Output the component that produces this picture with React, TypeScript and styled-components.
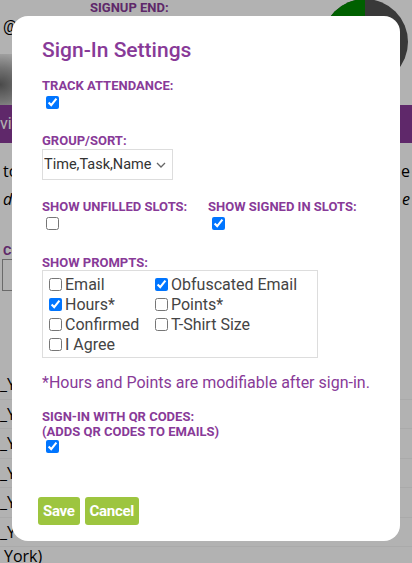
import styled, { createGlobalStyle } from "styled-components";

const GlobalStyle = createGlobalStyle`
  html, body {
    margin: 0;
    padding: 0;
    background: #ffffff;
    font-family: Roboto, "Liberation Sans", Arial, sans-serif;
    overflow: hidden;
  }
`;

const PURPLE = "#883a98";

const Page = styled.div`
  position: relative;
  width: 412px;
  height: 563px;
  overflow: hidden;
  color: #000;
  font-size: 16px;
`;

const Header = styled.div`
  display: flex;
  justify-content: space-between;
  height: 105px;
`;

const HeaderLeft = styled.div`
  display: flex;
  flex-direction: column;
  flex: 1;
`;

const SignupEnd = styled.div`
  padding-left: 90px;
  font-size: 13px;
  font-weight: bold;
  color: ${PURPLE};
  line-height: 16px;
`;

const AtLine = styled.div`
  padding: 2px 0 0 3px;
  font-size: 16px;
  line-height: 18px;
`;

const Shade = styled.div`
  margin-top: 18px;
  width: 40px;
  height: 56px;
  background: radial-gradient(ellipse at 0% 60%, #6a6a6a 0%, #a8a8a8 40%, #fff 85%);
`;

const Pie = styled.svg`
  margin: -1px 4px 0 0;
  flex-shrink: 0;
`;

const NavBar = styled.div`
  height: 38px;
  background: ${PURPLE};
  color: #fff;
  font-size: 16px;
  line-height: 38px;
  white-space: nowrap;
  overflow: hidden;
`;

const TextRow = styled.div<{ $italic?: boolean }>`
  display: flex;
  justify-content: space-between;
  padding: 0 2px 0 3px;
  height: 28px;
  line-height: 28px;
  font-style: ${(p) => (p.$italic ? "italic" : "normal")};
  font-family: "Open Sans", Roboto, sans-serif;
`;

const FirstRow = styled(TextRow)`
  margin-top: 14px;
`;

const ColLabel = styled.div`
  margin: 30px 0 0 3px;
  font-weight: bold;
  font-size: 13px;
  color: ${PURPLE};
`;

const InputBox = styled.div`
  margin: 1px 0 0 2px;
  width: 80px;
  height: 30px;
  border: 1px solid #999;
  background: #fff;
`;

const List = styled.div`
  margin-top: 79px;
  display: flex;
  flex-direction: column;
`;

const ListItem = styled.div`
  height: 28.5px;
  line-height: 28.5px;
  font-family: "Open Sans", Roboto, sans-serif;
  border-bottom: 1px solid #f4f4f4;
`;

const LastItem = styled.div`
  height: 18px;
  line-height: 18px;
  padding-left: 4px;
  font-family: "Open Sans", Roboto, sans-serif;
`;

const Overlay = styled.div`
  position: absolute;
  inset: 0;
  background: rgba(0, 0, 0, 0.3);
`;

const Modal = styled.div`
  position: absolute;
  left: 12px;
  top: 16px;
  width: 388px;
  height: 525px;
  box-sizing: border-box;
  background: #fff;
  border-radius: 16px;
  padding: 20px 30px 16px 30px;
  display: flex;
  flex-direction: column;
`;

const Title = styled.h2`
  margin: 0;
  font-size: 21px;
  font-weight: 500;
  line-height: 28px;
  color: ${PURPLE};
`;

const Section = styled.div<{ $gap: number }>`
  margin-top: ${(p) => p.$gap}px;
`;

const Label = styled.div`
  font-size: 13px;
  font-weight: bold;
  line-height: 15px;
  color: ${PURPLE};
  text-transform: uppercase;
`;

const Check = styled.input.attrs({ type: "checkbox" })<{ $top?: number }>`
  display: block;
  width: 13px;
  height: 13px;
  margin: ${(p) => p.$top ?? 3}px 0 0 4px;
`;

const Pair = styled.div`
  display: grid;
  grid-template-columns: 166px auto;
`;

const SelectWrap = styled.div`
  position: relative;
  margin-top: 1px;
  width: 131px;
  height: 31px;
`;

const Select = styled.select`
  appearance: none;
  width: 131px;
  height: 31px;
  box-sizing: border-box;
  border: 1px solid #dddddd;
  border-radius: 0;
  background: #fff;
  padding: 0 0 0 1px;
  font-family: Roboto, "Liberation Sans", sans-serif;
  font-size: 14.5px;
  color: #333;
  outline: none;
`;

const Chevron = styled.svg`
  position: absolute;
  right: 7px;
  top: 13px;
  pointer-events: none;
`;

const PromptBox = styled.div`
  margin-top: 0;
  width: 276px;
  box-sizing: border-box;
  border: 1px solid #dddddd;
  padding: 3px 2px 3px 2px;
  display: grid;
  grid-template-columns: 106px auto;
`;

const Option = styled.label`
  display: flex;
  align-items: center;
  height: 20px;
  font-size: 16px;
  color: #444;
  white-space: nowrap;

  input {
    margin: 0 3px 0 4px;
    width: 13px;
    height: 13px;
  }
`;

const Note = styled.div`
  margin-top: 15px;
  font-size: 16px;
  line-height: 20px;
  color: ${PURPLE};
`;

const Buttons = styled.div`
  margin-top: auto;
  margin-left: -4px;
  display: flex;
  gap: 5px;
`;

const Button = styled.button`
  height: 28px;
  padding: 0 5px;
  border: none;
  border-radius: 3px;
  background: #9dc53f;
  color: #fff;
  font-family: Roboto, "Liberation Sans", sans-serif;
  font-size: 15px;
  font-weight: bold;
  letter-spacing: -0.3px;
  cursor: pointer;
`;

const prompts = [
  { name: "Email", checked: false },
  { name: "Obfuscated Email", checked: true },
  { name: "Hours*", checked: true },
  { name: "Points*", checked: false },
  { name: "Confirmed", checked: false },
  { name: "T-Shirt Size", checked: false },
  { name: "I Agree", checked: false },
];

const listRows = ["_Y", "_Y", "_Y", "_Y", "_Y", "_Y"];

export default function App() {
  return (
    <>
      <GlobalStyle />
      <Page>
        <Header>
          <HeaderLeft>
            <SignupEnd>SIGNUP END:</SignupEnd>
            <AtLine>@</AtLine>
            <Shade />
          </HeaderLeft>
          <Pie width="86" height="86" viewBox="0 0 86 86">
            <circle cx="43" cy="43" r="43" fill="#525252" />
            <path d="M43 43 L43 0 A43 43 0 0 0 0 43 Z" fill="#008a00" />
          </Pie>
        </Header>
        <NavBar>vices</NavBar>
        <FirstRow>
          <span>to</span>
          <span>e</span>
        </FirstRow>
        <TextRow $italic>
          <span>d</span>
          <span>y e</span>
        </TextRow>
        <ColLabel>CO</ColLabel>
        <InputBox />
        <List>
          {listRows.map((r, i) => (
            <ListItem key={i}>{r}</ListItem>
          ))}
          <LastItem>York)</LastItem>
        </List>

        <Overlay>
          <Modal>
            <Title>Sign-In Settings</Title>

            <Section $gap={14}>
              <Label>Track Attendance:</Label>
              <Check defaultChecked />
            </Section>

            <Section $gap={24}>
              <Label>Group/Sort:</Label>
              <SelectWrap>
                <Select defaultValue="tt">
                  <option value="tt">Time,Task,Name</option>
                </Select>
                <Chevron width="10" height="6" viewBox="0 0 10 6">
                  <path d="M1 1 L5 5 L9 1" fill="none" stroke="#666" strokeWidth="1.3" />
                </Chevron>
              </SelectWrap>
            </Section>

            <Section $gap={19}>
              <Pair>
                <div>
                  <Label>Show Unfilled Slots:</Label>
                  <Check />
                </div>
                <div>
                  <Label>Show Signed In Slots:</Label>
                  <Check defaultChecked />
                </div>
              </Pair>
            </Section>

            <Section $gap={25}>
              <Label>Show Prompts:</Label>
              <PromptBox>
                {prompts.map((p) => (
                  <Option key={p.name}>
                    <input type="checkbox" defaultChecked={p.checked} />
                    {p.name}
                  </Option>
                ))}
              </PromptBox>
            </Section>

            <Note>*Hours and Points are modifiable after sign-in.</Note>

            <Section $gap={16}>
              <Label>
                Sign-In with QR Codes:
                <br />
                (Adds QR Codes to Emails)
              </Label>
              <Check defaultChecked $top={1} />
            </Section>

            <Buttons>
              <Button>Save</Button>
              <Button>Cancel</Button>
            </Buttons>
          </Modal>
        </Overlay>
      </Page>
    </>
  );
}
